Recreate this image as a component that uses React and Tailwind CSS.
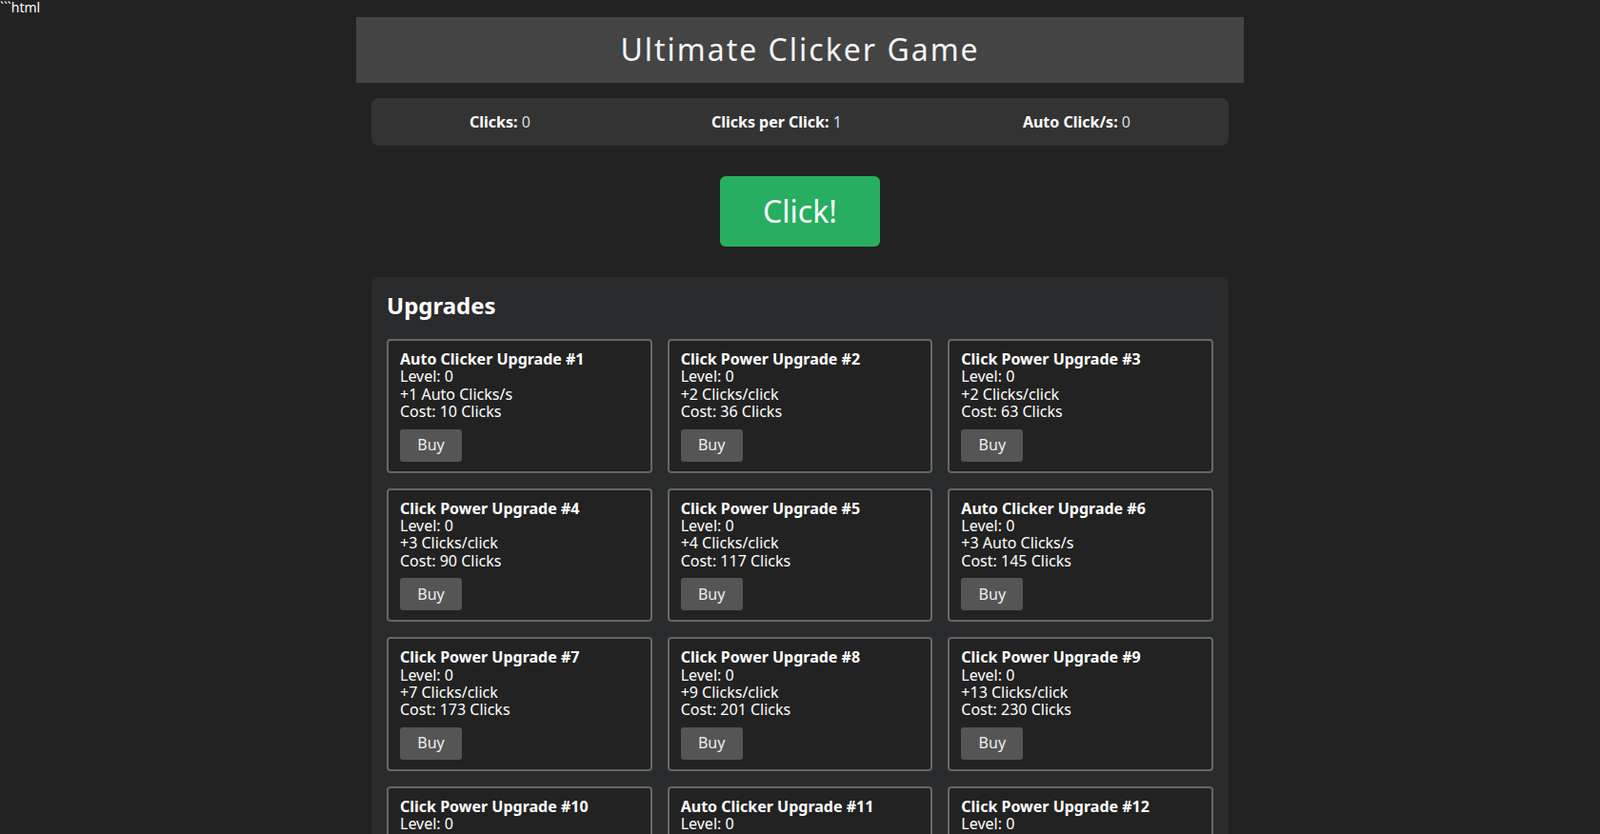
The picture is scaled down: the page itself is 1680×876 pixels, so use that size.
const ups = [
  ["Auto Clicker Upgrade #1", "+1 Auto Clicks/s", 10],
  ["Click Power Upgrade #2", "+2 Clicks/click", 36],
  ["Click Power Upgrade #3", "+2 Clicks/click", 63],
  ["Click Power Upgrade #4", "+3 Clicks/click", 90],
  ["Click Power Upgrade #5", "+4 Clicks/click", 117],
  ["Auto Clicker Upgrade #6", "+3 Auto Clicks/s", 145],
  ["Click Power Upgrade #7", "+7 Clicks/click", 173],
  ["Click Power Upgrade #8", "+9 Clicks/click", 201],
  ["Click Power Upgrade #9", "+13 Clicks/click", 230],
  ["Click Power Upgrade #10", "+15 Clicks/click", 258],
  ["Auto Clicker Upgrade #11", "+6 Auto Clicks/s", 286],
  ["Click Power Upgrade #12", "+20 Clicks/click", 314],
];

export default function App() {
  return (
    <div className="min-h-screen bg-[#222222] text-white font-['Liberation_Sans'] text-[16px] leading-[1.15]">
      <div className="text-[14px] leading-[16px] h-[18px]">```html</div>
      <div className="w-[932px] mx-auto">
        <div className="bg-[#444444] h-[69px] flex items-center justify-center text-[32px] tracking-[2px] text-[#f5f5f5]">
          Ultimate Clicker Game
        </div>
        <div className="mx-4 mt-4 bg-[#333333] rounded-lg h-[50px] flex items-center justify-around px-[8px]">
          <div><b>Clicks:</b> <span className="text-[#ddd]">0</span></div>
          <div><b>Clicks per Click:</b> <span className="text-[#cfe0ff]">1</span></div>
          <div><b>Auto Click/s:</b> <span className="text-[#ddd]">0</span></div>
        </div>
        <div className="flex justify-center mt-8">
          <button className="bg-[#27ae60] rounded-md w-[168px] h-[74px] text-[32px] text-white">Click!</button>
        </div>
        <div className="mx-4 mt-8 bg-[#2a2b2d] rounded-lg px-4 pt-4 pb-4">
          <h2 className="text-[24px] font-bold leading-[28px] mb-[21px]">Upgrades</h2>
          <div className="grid grid-cols-3 gap-4">
            {ups.map(([t, e, c]) => (
              <div key={t} className="border-2 border-[#666] rounded bg-[#222222] px-3 pt-[10px] pb-[10px]">
                <div className="font-bold">{t}</div>
                <div>Level: 0</div>
                <div>{e}</div>
                <div>Cost: {c} Clicks</div>
                <button className="mt-[9px] bg-[#555555] rounded-[3px] w-[65px] h-[34px] text-[#eee]">Buy</button>
              </div>
            ))}
          </div>
        </div>
      </div>
    </div>
  );
}
